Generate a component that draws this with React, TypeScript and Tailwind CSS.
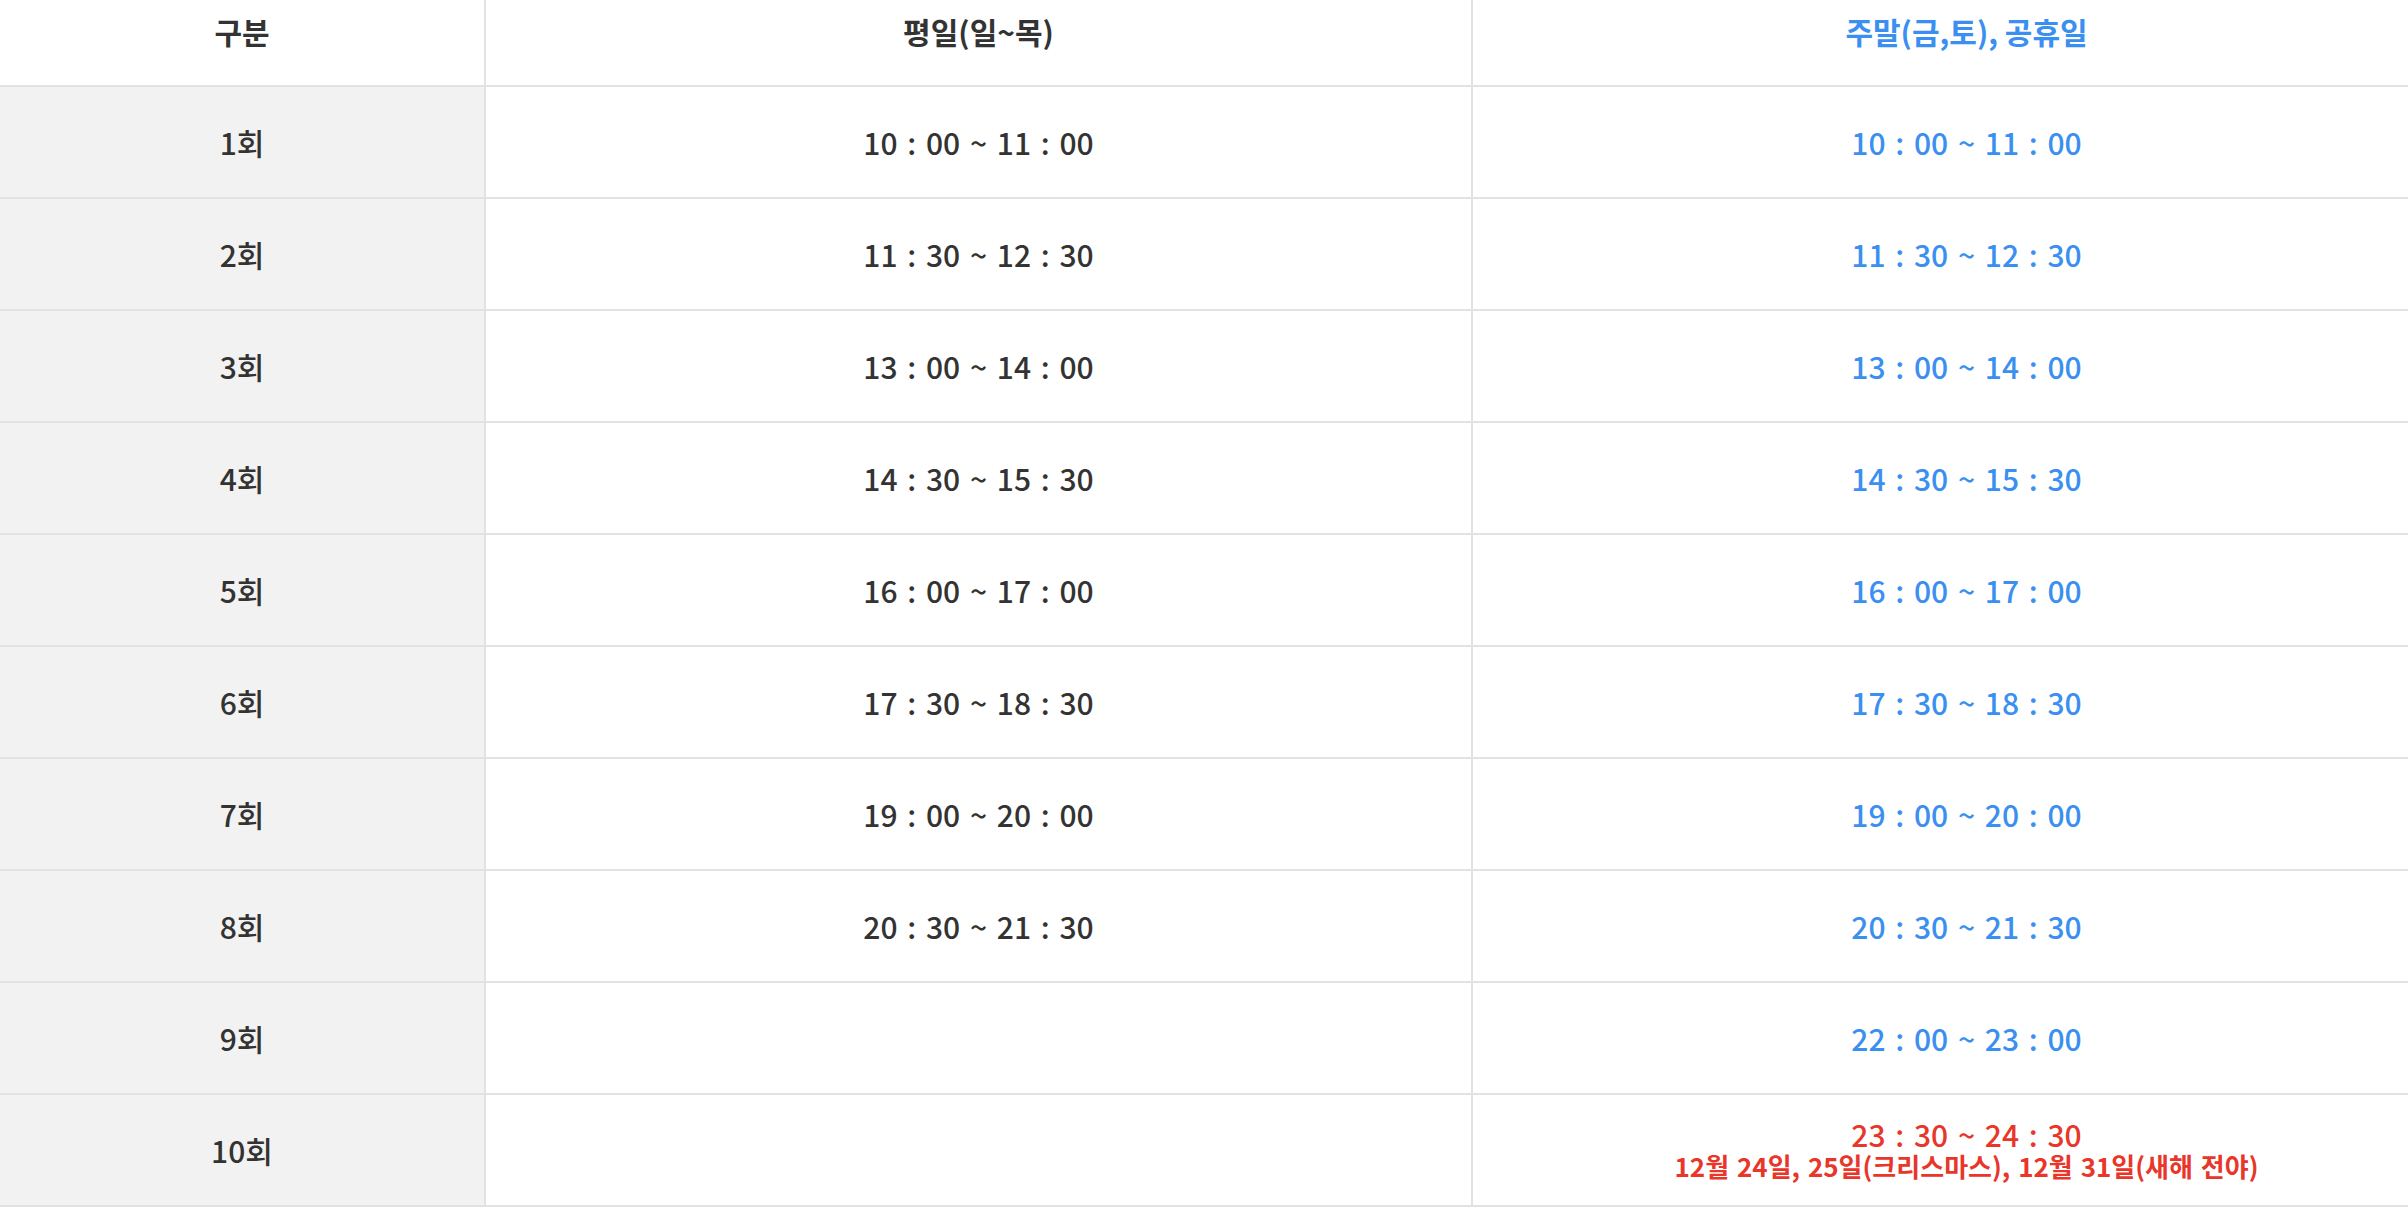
const ROWS = [
  { label: '1회', weekday: '10 : 00 ~ 11 : 00', weekend: '10 : 00 ~ 11 : 00' },
  { label: '2회', weekday: '11 : 30 ~ 12 : 30', weekend: '11 : 30 ~ 12 : 30' },
  { label: '3회', weekday: '13 : 00 ~ 14 : 00', weekend: '13 : 00 ~ 14 : 00' },
  { label: '4회', weekday: '14 : 30 ~ 15 : 30', weekend: '14 : 30 ~ 15 : 30' },
  { label: '5회', weekday: '16 : 00 ~ 17 : 00', weekend: '16 : 00 ~ 17 : 00' },
  { label: '6회', weekday: '17 : 30 ~ 18 : 30', weekend: '17 : 30 ~ 18 : 30' },
  { label: '7회', weekday: '19 : 00 ~ 20 : 00', weekend: '19 : 00 ~ 20 : 00' },
  { label: '8회', weekday: '20 : 30 ~ 21 : 30', weekend: '20 : 30 ~ 21 : 30' },
  { label: '9회', weekday: '', weekend: '22 : 00 ~ 23 : 00' },
]

export default function App() {
  return (
    <div
      className="w-full overflow-hidden bg-white text-[#333333]"
      style={{ fontFamily: '"Noto Sans CJK KR", "Noto Sans", sans-serif' }}
    >
      <div className="w-[2460px]">
        {/* header */}
        <div className="grid grid-cols-[486px_987px_987px] h-[87px] border-b-2 border-[#e2e2e2]">
          <div className="flex justify-center pt-[11px] border-r-2 border-[#e2e2e2] text-[30px] font-bold leading-[40px]">
            구분
          </div>
          <div className="flex justify-center pt-[11px] border-r-2 border-[#e2e2e2] text-[30px] font-bold leading-[40px]">
            평일(일~목)
          </div>
          <div className="flex justify-center pt-[11px] text-[30px] font-bold leading-[40px] text-[#3a8ff0]">
            주말(금,토), 공휴일
          </div>
        </div>

        {ROWS.map((row) => (
          <div
            key={row.label}
            className="grid grid-cols-[486px_987px_987px] h-[112px] border-b-2 border-[#e2e2e2] text-[30px] font-medium [word-spacing:3px]"
          >
            <div className="flex items-center justify-center bg-[#f2f2f2] border-r-2 border-[#e2e2e2]">
              {row.label}
            </div>
            <div className="flex items-center justify-center border-r-2 border-[#e2e2e2]">
              {row.weekday}
            </div>
            <div className="flex items-center justify-center text-[#3a8ff0]">{row.weekend}</div>
          </div>
        ))}

        {/* last row */}
        <div className="grid grid-cols-[486px_987px_987px] h-[112px] border-b-2 border-[#e2e2e2] font-medium">
          <div className="flex items-center justify-center bg-[#f2f2f2] border-r-2 border-[#e2e2e2] text-[30px]">
            10회
          </div>
          <div className="border-r-2 border-[#e2e2e2]" />
          <div className="flex flex-col items-center justify-center text-[#e8362a]">
            <span className="text-[30px] leading-[31px] [word-spacing:3px]">23 : 30 ~ 24 : 30</span>
            <span className="text-[26px] font-bold leading-[31px] [word-spacing:2px]">
              12월 24일, 25일(크리스마스), 12월 31일(새해 전야)
            </span>
          </div>
        </div>
      </div>
    </div>
  )
}
